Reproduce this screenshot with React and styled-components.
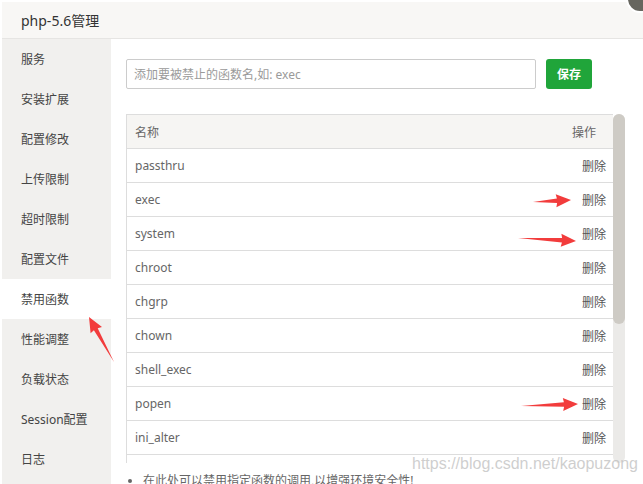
import React from 'react'
import styled, {createGlobalStyle} from 'styled-components'

const GlobalStyle = createGlobalStyle`
  html, body {
    margin: 0;
    padding: 0;
    width: 643px;
    height: 484px;
    overflow: hidden;
    background: #fff;
    font-family: "Noto Sans", "Noto Sans CJK SC", sans-serif;
  }
`

const Dialog = styled.div`
  position: relative;
  width: 643px;
  height: 484px;
  padding: 2px 0 0 2px;
  box-sizing: border-box;
  display: flex;
  flex-direction: column;
  overflow: hidden;
`

const TitleBar = styled.div`
  height: 36px;
  flex-shrink: 0;
  display: flex;
  align-items: center;
  padding-left: 19px;
  background: #f8f7f5;
  border-bottom: 1px solid #e6e5e3;
  font-size: 14px;
  color: #333;
`

const CloseDot = styled.div`
  position: absolute;
  right: -11px;
  top: -15px;
  width: 24px;
  height: 24px;
  border-radius: 50%;
  border: 2px solid #fff;
  background: #67665f;
`

const Body = styled.div`
  flex: 1;
  display: flex;
  min-height: 0;
`

const Sidebar = styled.ul`
  list-style: none;
  margin: 0;
  padding: 0;
  width: 109px;
  flex-shrink: 0;
  background: #f1f0ee;
`

const NavItem = styled.li`
  height: 40px;
  line-height: 41px;
  padding-left: 19px;
  font-size: 12px;
  color: #444;
  background: ${p => (p.$active ? '#fff' : 'transparent')};
`

const Content = styled.div`
  flex: 1;
  padding: 20px 0 0 15px;
  display: flex;
  flex-direction: column;
  min-height: 0;
`

const AddRow = styled.div`
  display: flex;
  gap: 10px;
  height: 30px;
  flex-shrink: 0;
`

const Input = styled.input`
  width: 410px;
  height: 30px;
  box-sizing: border-box;
  border: 1px solid #ccc;
  border-radius: 2px;
  padding: 0 7px;
  font-family: inherit;
  font-size: 12px;
  color: #333;
  outline: none;
  &::placeholder {
    color: #9a9a9a;
  }
`

const SaveButton = styled.button`
  width: 46px;
  height: 30px;
  border: none;
  border-radius: 3px;
  background: #20a53a;
  color: #fff;
  font-family: inherit;
  font-size: 12px;
  font-weight: bold;
  padding: 0;
`

const ScrollArea = styled.div`
  margin-top: 25px;
  display: flex;
  height: 349px;
  flex-shrink: 0;
`

const Viewport = styled.div`
  width: 487px;
  height: 100%;
  overflow: hidden;
`

const Track = styled.div`
  width: 12px;
  height: 100%;
  border-radius: 6px;
  background: #ebeae8;
  position: relative;
`

const Thumb = styled.div`
  width: 12px;
  border-radius: 6px;
  background: #cecbc5;
`

const Table = styled.div`
  width: 487px;
  border-left: 1px solid #ddd;
  border-top: 1px solid #ddd;
  box-sizing: border-box;
`

const Row = styled.div`
  height: 34px;
  box-sizing: border-box;
  display: flex;
  align-items: center;
  justify-content: space-between;
  padding: 0 ${p => (p.$head ? '17px' : '7px')} 0 8px;
  border-bottom: 1px solid #ddd;
  background: ${p => (p.$head ? '#f6f5f3' : '#fff')};
  font-size: 12px;
  color: #666;
`

const DeleteLink = styled.span`
  color: #555;
`

const Tips = styled.ul`
  margin: 8px 0 0;
  padding-left: 17px;
  font-size: 12px;
  color: #666;
  line-height: 20px;
  flex-shrink: 0;
`

const Watermark = styled.div`
  position: absolute;
  left: 412px;
  top: 455px;
  font-family: "Liberation Sans", Arial, sans-serif;
  font-size: 16px;
  color: rgba(190, 190, 190, 0.75);
  white-space: nowrap;
`

const Overlay = styled.svg`
  position: absolute;
  left: 0;
  top: 0;
  pointer-events: none;
`

const arrowPoints = (x1, y1, x2, y2, w = 6.5) => {
  const dx = x2 - x1
  const dy = y2 - y1
  const len = Math.hypot(dx, dy)
  const ux = dx / len
  const uy = dy / len
  const nx = -uy
  const ny = ux
  const local = [
    [0, 0],
    [len - 14, -2.2],
    [len - 15, -w],
    [len, 0],
    [len - 15, w],
    [len - 14, 2.2],
  ]
  return local
    .map(([a, b]) => `${(x1 + ux * a + nx * b).toFixed(1)},${(y1 + uy * a + ny * b).toFixed(1)}`)
    .join(' ')
}

const menu = ['服务', '安装扩展', '配置修改', '上传限制', '超时限制', '配置文件', '禁用函数', '性能调整', '负载状态', 'Session配置', '日志']

const funcs = ['passthru', 'exec', 'system', 'chroot', 'chgrp', 'chown', 'shell_exec', 'popen', 'ini_alter', 'ini_restore', 'dl', 'openlog', 'syslog', 'readlink', 'symlink', 'popepassthru']

const arrows = [
  [114, 362, 89, 317],
  [533, 202, 571, 200],
  [518, 238, 576, 241],
  [521, 406, 578, 404],
]

const VIEW_H = 349
const contentH = 34 * (funcs.length + 1) + 1
const thumbH = Math.round((VIEW_H * VIEW_H) / contentH)

const App = () => (
  <>
    <GlobalStyle />
    <Dialog>
      <TitleBar>php-5.6管理</TitleBar>
      <CloseDot />
      <Body>
        <Sidebar>
          {menu.map(m => (
            <NavItem key={m} $active={m === '禁用函数'}>{m}</NavItem>
          ))}
        </Sidebar>
        <Content>
          <AddRow>
            <Input placeholder="添加要被禁止的函数名,如: exec" />
            <SaveButton>保存</SaveButton>
          </AddRow>
          <ScrollArea>
            <Viewport>
              <Table>
                <Row $head>
                  <span>名称</span>
                  <span>操作</span>
                </Row>
                {funcs.map(f => (
                  <Row key={f}>
                    <span>{f}</span>
                    <DeleteLink>删除</DeleteLink>
                  </Row>
                ))}
              </Table>
            </Viewport>
            <Track>
              <Thumb style={{height: thumbH}} />
            </Track>
          </ScrollArea>
          <Tips>
            <li>在此处可以禁用指定函数的调用,以增强环境安全性!</li>
          </Tips>
        </Content>
      </Body>
      <Watermark>https://blog.csdn.net/kaopuzong</Watermark>
      <Overlay width="643" height="484">
        {arrows.map((a, i) => (
          <polygon key={i} points={arrowPoints(...a)} fill="#f23c3c" />
        ))}
      </Overlay>
    </Dialog>
  </>
)

export default App
